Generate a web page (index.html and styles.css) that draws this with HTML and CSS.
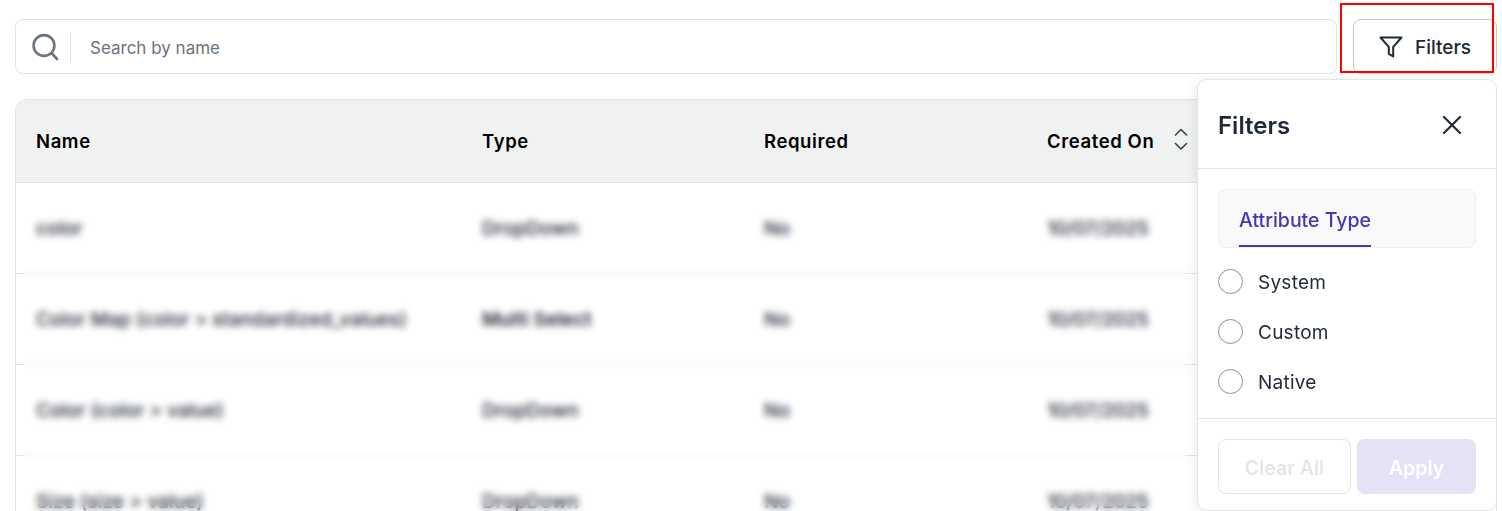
FILE: index.html
```html
<!DOCTYPE html>
<html lang="en">
<head>
    <meta charset="UTF-8">
    <title>Attributes</title>
    <link rel="stylesheet" href="styles.css">
</head>
<body>
    <main class="page">
        <div class="toolbar">
            <div class="search">
                <svg class="search-icon" width="28" height="28" viewBox="0 0 28 28" fill="none" stroke="#6b7280" stroke-width="2.6" stroke-linecap="round">
                    <circle cx="12" cy="12.5" r="10.4"/>
                    <path d="M19.8 20.3 25 26"/>
                </svg>
                <span class="search-text">Search by name</span>
            </div>
            <button class="filter-btn">
                <svg width="24" height="22" viewBox="0 0 24 22" fill="none" stroke="#1f2937" stroke-width="2" stroke-linejoin="round">
                    <path d="M1.5 1.5h21l-8.3 9.3v9.6l-4.4-2.6v-7z"/>
                </svg>
                <span>Filters</span>
            </button>
        </div>

        <section class="table">
            <div class="row head">
                <div>Name</div>
                <div>Type</div>
                <div>Required</div>
                <div class="sortable">Created On
                    <svg class="sort-icon" width="14" height="22" viewBox="0 0 14 22" fill="none" stroke="#374151" stroke-width="1.6" stroke-linecap="round" stroke-linejoin="round">
                        <path d="M1.5 7 7 1.5 12.5 7"/>
                        <path d="M1.5 15.5 7 21l5.5-5.5"/>
                    </svg>
                </div>
            </div>
            <div class="row">
                <div>color</div><div>DropDown</div><div>No</div><div class="date">10/07/2025</div>
            </div>
            <div class="row">
                <div>Color Map (color &gt; standardized_values)</div><div class="dark">Multi Select</div><div>No</div><div class="date">10/07/2025</div>
            </div>
            <div class="row">
                <div>Color (color &gt; value)</div><div>DropDown</div><div>No</div><div class="date">10/07/2025</div>
            </div>
            <div class="row">
                <div>Size (size &gt; value)</div><div>DropDown</div><div>No</div><div class="date">10/07/2025</div>
            </div>
            <div class="blur-cover"></div>
        </section>
    </main>

    <aside class="panel">
        <div class="panel-head">
            <h2>Filters</h2>
            <svg class="close-icon" width="20" height="20" viewBox="0 0 20 20" fill="none" stroke="#1f2937" stroke-width="2.2" stroke-linecap="round">
                <path d="M2 2l16 16M18 2 2 18"/>
            </svg>
        </div>
        <div class="panel-body">
            <div class="tabs"><span class="tab">Attribute Type</span></div>
            <label class="radio"><span class="dot"></span><span class="radio-text">System</span></label>
            <label class="radio"><span class="dot"></span><span class="radio-text">Custom</span></label>
            <label class="radio"><span class="dot"></span><span class="radio-text">Native</span></label>
        </div>
        <div class="panel-foot">
            <button class="clear">Clear All</button>
            <button class="apply">Apply</button>
        </div>
    </aside>

    <div class="highlight"></div>
</body>
</html>
```

FILE: styles.css
```css
* {
    box-sizing: border-box;
}

html, body {
    height: 511px;
    overflow: hidden;
}

body {
    margin: 0;
    font-family: Inter, sans-serif;
    background: #fff;
    color: #1f2937;
}

.page {
    height: 511px;
    overflow: hidden;
    padding: 19px 5px 0 15px;
}

.toolbar {
    display: flex;
    gap: 16px;
    height: 55px;
}

.search {
    flex: 1;
    display: flex;
    align-items: center;
    border: 1px solid #e3e3e3;
    border-radius: 8px;
    padding-left: 16px;
}

.search-icon {
    margin-top: 1px;
}

.search-text {
    margin-left: 10px;
    padding-left: 19px;
    height: 30px;
    line-height: 32px;
    border-left: 1px solid #e3e3e3;
    font-size: 17px;
    color: #6b7280;
}

.filter-btn {
    width: 144px;
    display: flex;
    align-items: center;
    justify-content: center;
    gap: 12px;
    background: #fff;
    border: 1px solid #c9c9c9;
    border-radius: 8px;
    font: 500 19px Inter, sans-serif;
    color: #1f2937;
}

.filter-btn span {
    margin-top: 2px;
}

.table {
    position: relative;
    margin-top: 25px;
    border: 1px solid #e3e3e3;
    border-bottom: 0;
    border-radius: 12px 12px 0 0;
    overflow: hidden;
}

.row {
    display: grid;
    grid-template-columns: 446px 282px 283px 1fr;
    align-items: center;
    height: 91px;
    padding-left: 20px;
    border-bottom: 1px solid #e3e3e3;
    font-size: 19px;
    letter-spacing: 0.1px;
    font-weight: 500;
    color: #1f2937;
}

.row .dark {
    font-weight: 600;
}

.row .date {
    letter-spacing: -0.3px;
}

.head {
    height: 83px;
    background: #f0f2f2;
    font-weight: 600;
    font-size: 18.5px;
    letter-spacing: 0.6px;
    color: #000;
}

.sortable {
    display: flex;
    align-items: center;
    gap: 20px;
}

.sort-icon {
    margin-top: -4px;
}

.blur-cover {
    position: absolute;
    top: 83px;
    left: 8px;
    right: 310px;
    bottom: 0;
    backdrop-filter: blur(3.5px);
}

.panel {
    position: absolute;
    top: 79px;
    left: 1197px;
    width: 300px;
    height: 432px;
    background: #fff;
    border: 1px solid #e3e3e3;
    border-radius: 10px;
    box-shadow: -4px 0 10px rgba(0, 0, 0, 0.06);
    display: flex;
    flex-direction: column;
}

.panel-head {
    height: 89px;
    display: flex;
    align-items: center;
    justify-content: space-between;
    padding: 0 34px 0 20px;
    border-bottom: 1px solid #e3e3e3;
}

.panel-head h2 {
    margin: 2px 0 0;
    font-size: 24px;
    font-weight: 600;
}

.close-icon {
    margin-top: 2px;
}

.panel-body {
    flex: 1;
    padding: 20px 20px 0;
    border-bottom: 1px solid #e3e3e3;
}

.tabs {
    height: 59px;
    padding-left: 20px;
    background: #f9f9f9;
    border: 1px solid #eeeeee;
    border-radius: 8px;
    margin-bottom: 8px;
}

.tab {
    display: inline-block;
    height: 57px;
    line-height: 60px;
    border-bottom: 2px solid #4338b0;
    font-size: 19.5px;
    font-weight: 500;
    color: #4338b0;
}

.radio {
    display: flex;
    align-items: center;
    gap: 15px;
    height: 50px;
    font-size: 19px;
    letter-spacing: 0.25px;
}

.radio-text {
    margin-top: 2px;
}

.dot {
    width: 25px;
    height: 25px;
    border: 1px solid #8b8f99;
    border-radius: 50%;
}

.panel-foot {
    display: flex;
    gap: 6px;
    padding: 20px 20px 16px;
}

.panel-foot button {
    height: 55px;
    padding: 2px 0 0;
    border-radius: 8px;
    font: 600 19.5px Inter, sans-serif;
}

.clear {
    width: 133px;
    background: #fff;
    border: 1px solid #e3e3e3;
    color: #e5e6e8;
}

.apply {
    width: 119px;
    background: #e6e1f5;
    border: 0;
    color: #fff;
}

.highlight {
    position: absolute;
    top: 3px;
    left: 1340px;
    width: 154px;
    height: 70px;
    border: 2px solid #f00;
}
```
